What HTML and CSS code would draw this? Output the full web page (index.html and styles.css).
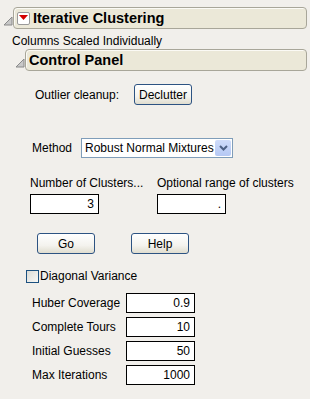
FILE: index.html
```html
<!DOCTYPE html>
<html lang="en">
<head>
  <meta charset="UTF-8">
  <title>Iterative Clustering</title>
  <link rel="stylesheet" href="styles.css">
</head>
<body>
  <div class="outline">
    <svg class="tri" width="10" height="10" viewBox="0 0 10 10"><path d="M9 1 L9 9 L1 9 Z" fill="#c8c8c8" stroke="#8a8a8a" stroke-width="1"/></svg>
    <div class="outline-box">
      <span class="red-btn"><svg width="9" height="6" viewBox="0 0 9 6"><path d="M0 0 H9 L4.5 5 Z" fill="#d40000"/></svg></span>
      <span class="outline-title">Iterative Clustering</span>
    </div>
  </div>
  <div class="note">Columns Scaled Individually</div>

  <div class="outline panel-head">
    <svg class="tri" width="10" height="10" viewBox="0 0 10 10"><path d="M9 1 L9 9 L1 9 Z" fill="#c8c8c8" stroke="#8a8a8a" stroke-width="1"/></svg>
    <div class="outline-box">
      <span class="outline-title">Control Panel</span>
    </div>
  </div>

  <div class="panel">
    <div class="outlier-row">
      <span>Outlier cleanup:</span>
      <button class="btn btn-declutter">Declutter</button>
    </div>

    <div class="method-row">
      <span>Method</span>
      <div class="combo">
        <span class="combo-text">Robust Normal Mixtures</span>
        <span class="combo-arrow"><svg width="9" height="6" viewBox="0 0 9 6"><path d="M1 1 L4.5 4.5 L8 1" fill="none" stroke="#4d6185" stroke-width="2"/></svg></span>
      </div>
    </div>

    <div class="clusters">
      <div class="field">
        <span>Number of Clusters...</span>
        <input class="num" type="text" value="3" readonly>
      </div>
      <div class="field">
        <span>Optional range of clusters</span>
        <input class="num" type="text" value="." readonly>
      </div>
    </div>

    <div class="actions">
      <button class="btn">Go</button>
      <button class="btn">Help</button>
    </div>

    <label class="check"><span class="box"></span>Diagonal Variance</label>

    <div class="params">
      <span>Huber Coverage</span><input class="num" type="text" value="0.9" readonly>
      <span>Complete Tours</span><input class="num" type="text" value="10" readonly>
      <span>Initial Guesses</span><input class="num" type="text" value="50" readonly>
      <span>Max Iterations</span><input class="num" type="text" value="1000" readonly>
    </div>
  </div>
</body>
</html>
```

FILE: styles.css
```css
body {
  margin: 0;
  padding: 7px 3px 0 3px;
  background: #f1efeb;
  font-family: "Liberation Sans", Arial, sans-serif;
  font-size: 12px;
  color: #000;
}
.outline {
  display: flex;
  align-items: center;
}
.tri {
  flex: none;
  margin-top: 6px;
}
.outline-box {
  flex: 1;
  height: 20px;
  display: flex;
  align-items: center;
  padding-left: 3px;
  background: #ebe8d8;
  border: 1px solid #a8a699;
  border-radius: 4px;
  box-shadow: inset 1px 1px 0 #fbfaf5;
}
.red-btn {
  width: 11px;
  height: 11px;
  display: flex;
  align-items: center;
  justify-content: center;
  background: #fff;
  border: 1px solid #9a9a9a;
  border-radius: 2px;
  margin-right: 3px;
}
.outline-title {
  font-weight: bold;
  font-size: 14.5px;
}
.note {
  margin: 5px 0 0 9px;
  line-height: 14px;
}
.panel-head {
  margin: 1px 0 0 12px;
}
.panel {
  padding-left: 27px;
}
.outlier-row {
  display: flex;
  align-items: center;
  margin-top: 13px;
  padding-left: 5px;
}
.outlier-row span {
  width: 99px;
}
.btn {
  font-family: "Liberation Sans", Arial, sans-serif;
  font-size: 12px;
  height: 21px;
  padding: 0 3px;
  background: linear-gradient(#ffffff, #f4f3ee 60%, #e0ddcf);
  border: 1px solid #2d5382;
  border-radius: 3px;
  color: #000;
}
.btn-declutter {
  width: 58px;
}
.method-row {
  display: flex;
  align-items: center;
  margin-top: 33px;
  padding-left: 2px;
}
.method-row span:first-child {
  width: 49px;
}
.combo {
  width: 150px;
  height: 18px;
  display: flex;
  align-items: center;
  background: #fff;
  border: 1px solid #7f9db9;
}
.combo-text {
  flex: 1;
  padding-left: 3px;
  white-space: nowrap;
}
.combo-arrow {
  width: 16px;
  height: 16px;
  margin-right: 1px;
  display: flex;
  align-items: center;
  justify-content: center;
  background: linear-gradient(#cfdcfa, #b5c8f4);
  border-radius: 2px;
}
.clusters {
  display: flex;
  margin-top: 18px;
}
.field {
  display: flex;
  flex-direction: column;
  gap: 4px;
  width: 127px;
  white-space: nowrap;
}
.num {
  box-sizing: border-box;
  width: 69px;
  height: 20px;
  padding: 0 4px;
  border: 1px solid #000;
  background: #fff;
  font-family: "Liberation Sans", Arial, sans-serif;
  font-size: 12px;
  text-align: right;
  outline: none;
}
.actions {
  display: flex;
  gap: 36px;
  margin: 19px 0 0 7px;
}
.actions .btn {
  width: 58px;
}
.check {
  display: flex;
  align-items: center;
  margin: 15px 0 0 -4px;
}
.check .box {
  width: 11px;
  height: 11px;
  border: 1px solid #1c5180;
  background: linear-gradient(135deg, #dcdcd6, #f8f8f6);
  margin-right: 1px;
}
.params {
  display: grid;
  grid-template-columns: 94px 69px;
  row-gap: 4px;
  align-items: center;
  margin-top: 10px;
  padding-left: 2px;
}
```
